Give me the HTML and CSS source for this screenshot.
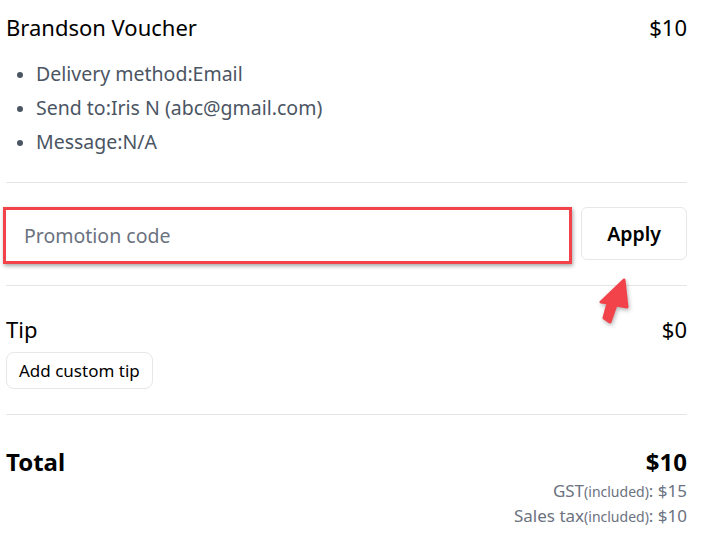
FILE: index.html
```html
<!DOCTYPE html>
<html lang="en">
<head>
  <meta charset="UTF-8">
  <title>Checkout - Summary</title>
  <link rel="stylesheet" href="styles.css">
</head>
<body>

<div class="summary">
  <div class="row item-title">
    <span>Brandson Voucher</span>
    <span>$10</span>
  </div>
  <ul class="details">
    <li>Delivery method:Email</li>
    <li>Send to:Iris N (abc@gmail.com)</li>
    <li>Message:N/A</li>
  </ul>

  <div class="divider first"></div>

  <div class="promo">
    <div class="promo-box">
      <input type="text" placeholder="Promotion code">
    </div>
    <button class="apply">Apply</button>
    <svg class="arrow" width="40" height="54" viewBox="0 0 40 54">
      <polygon points="28,5 5,27 12,28 8,43 14,47 20,30 31,32" fill="#f2434a" stroke="#f2434a" stroke-width="3" stroke-linejoin="round"/>
    </svg>
  </div>

  <div class="divider"></div>

  <div class="row tip-row">
    <span>Tip</span>
    <span>$0</span>
  </div>
  <button class="custom-tip">Add custom tip</button>

  <div class="divider"></div>

  <div class="row total-row">
    <span>Total</span>
    <span>$10</span>
  </div>
  <div class="tax">GST<small>(included)</small>: $15</div>
  <div class="tax">Sales tax<small>(included)</small>: $10</div>
</div>

</body>
</html>
```
FILE: styles.css
```css
body {
  margin: 0;
  padding: 0;
  font-family: "Noto Sans", "Open Sans", sans-serif;
  background: #fff;
  color: #000;
}
.summary {
  padding: 10px 19px 0 6px;
}
.row {
  display: flex;
  justify-content: space-between;
  align-items: center;
}
.item-title {
  font-size: 22px;
  line-height: 34px;
}
.details {
  margin: 13px 0 0;
  padding-left: 30px;
  color: #4b5563;
  font-size: 19.5px;
  line-height: 34px;
}
.details li::marker {
  font-size: 18px;
}
.divider {
  height: 1px;
  background: #e5e5e5;
  margin: 20px 0 0;
}
.divider.first {
  margin-top: 23px;
}
.promo {
  position: relative;
  display: flex;
  align-items: flex-start;
  gap: 9px;
  margin-top: 24px;
}
.promo-box {
  flex: 1;
  margin-left: -3px;
  border: 3px solid #f2434a;
  box-shadow: 1px 2px 4px rgba(0,0,0,0.35);
  background: #fff;
}
.promo-box input {
  width: 100%;
  box-sizing: border-box;
  height: 51px;
  border: none;
  outline: none;
  padding: 0 18px;
  font-family: inherit;
  font-size: 19.5px;
  color: #333;
  background: #fff;
}
.promo-box input::placeholder {
  color: #6b7280;
}
.apply {
  width: 106px;
  height: 53px;
  background: #fff;
  border: 1px solid #e5e7eb;
  border-radius: 6px;
  font-family: inherit;
  font-size: 19.5px;
  font-weight: 600;
  color: #000;
}
.arrow {
  position: absolute;
  left: 590px;
  top: 68px;
  filter: drop-shadow(1px 2px 2px rgba(0,0,0,0.3));
}
.promo + .divider {
  margin-top: 21px;
}
.tip-row {
  font-size: 22px;
  line-height: 34px;
  margin-top: 26px;
}
.custom-tip {
  margin-top: 6px;
  height: 37px;
  padding: 0 12px;
  background: #fff;
  border: 1px solid #e5e7eb;
  border-radius: 8px;
  font-family: inherit;
  font-size: 17px;
  color: #000;
}
.custom-tip + .divider {
  margin-top: 25px;
}
.total-row {
  font-size: 24px;
  font-weight: 700;
  line-height: 34px;
  margin-top: 30px;
}
.tax {
  text-align: right;
  color: #6b7280;
  font-size: 17px;
  line-height: 24px;
}
.tax small {
  font-size: 14px;
}
```
